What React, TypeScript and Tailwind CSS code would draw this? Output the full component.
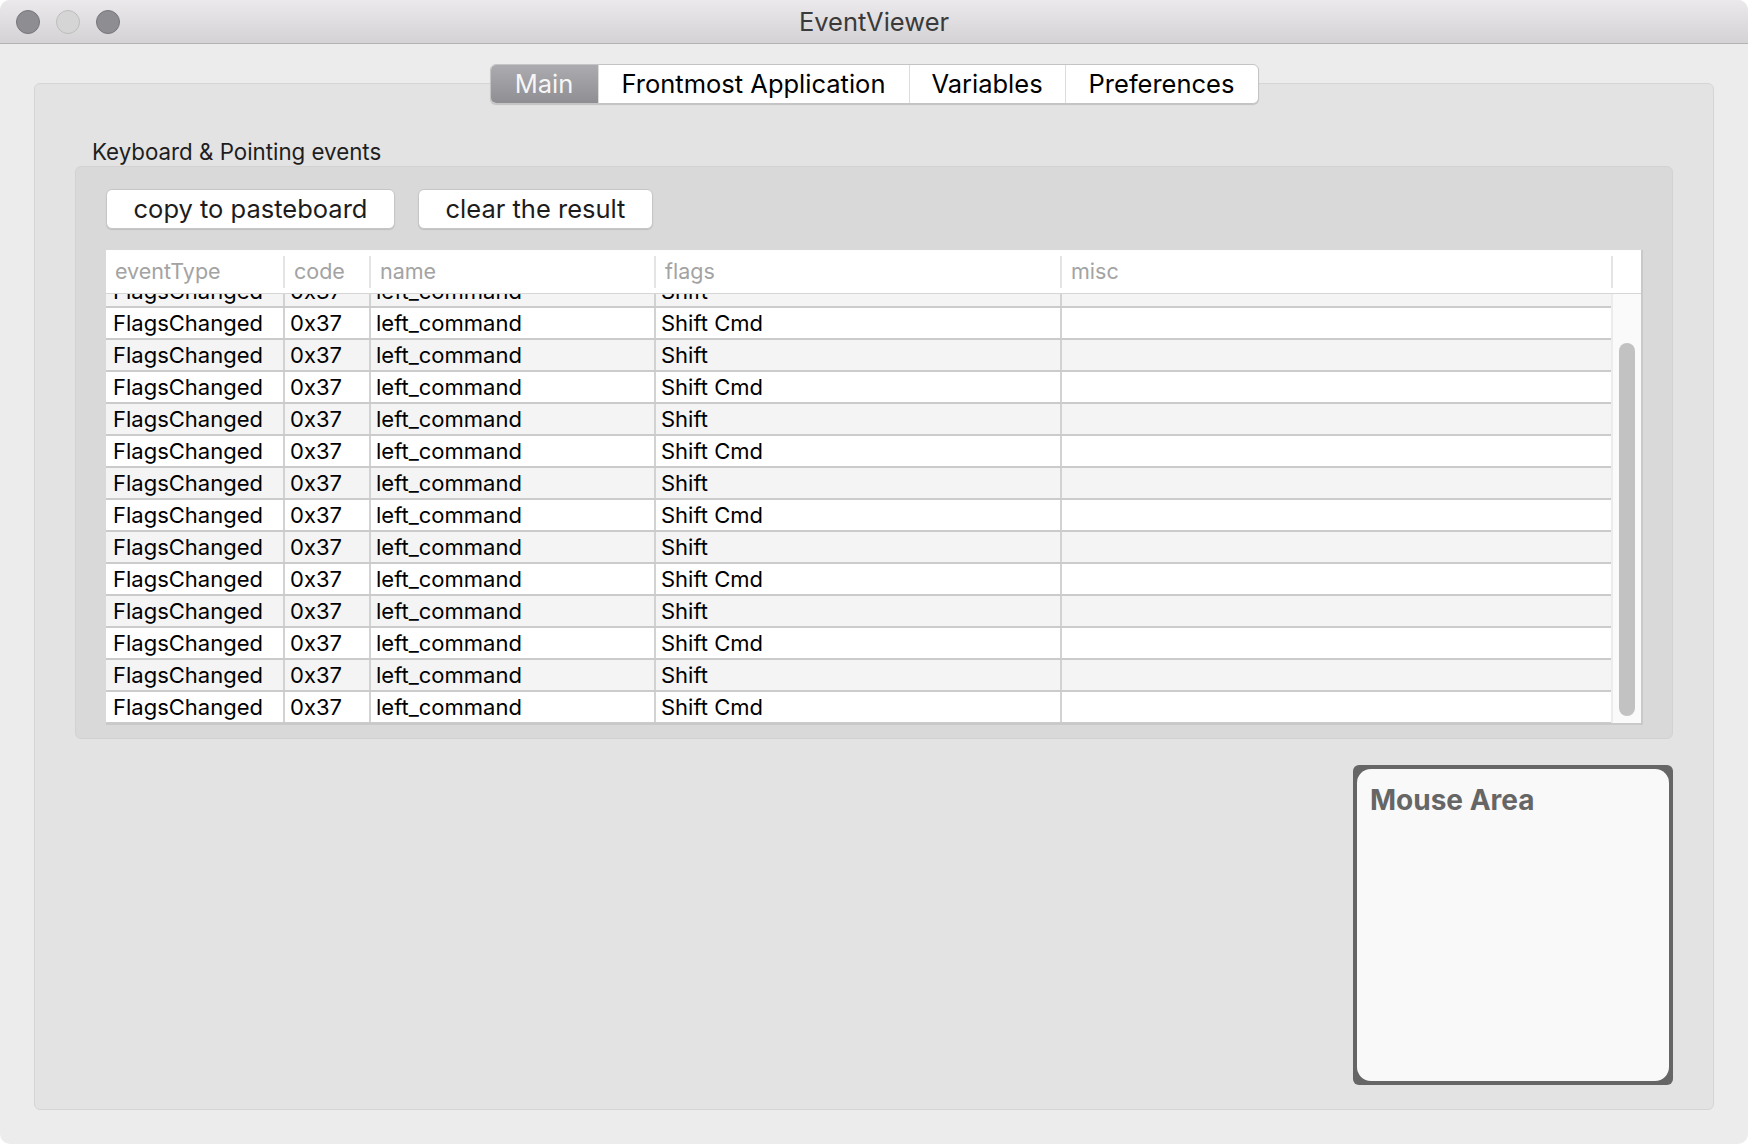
import React from 'react'

const font = { fontFamily: 'Inter, "Noto Sans", "Liberation Sans", sans-serif' }

type Row = {
  eventType: string
  code: string
  name: string
  flags: string
}

const rows: Row[] = Array.from({ length: 14 }, (_, i) => ({
  eventType: 'FlagsChanged',
  code: '0x37',
  name: 'left_command',
  flags: i % 2 === 0 ? 'Shift' : 'Shift Cmd',
}))

const tabs = [
  { label: 'Main', width: 'w-[107px]' },
  { label: 'Frontmost Application', width: 'w-[311px]' },
  { label: 'Variables', width: 'w-[156px]' },
  { label: 'Preferences', width: 'w-[193px]' },
]

function TrafficLights() {
  return (
    <div className="flex items-center gap-[16px] pl-[16px]">
      <span className="h-[24px] w-[24px] rounded-full border border-[#77767b] bg-[#8e8d92]" />
      <span className="h-[24px] w-[24px] rounded-full border border-[#bdbdbd] bg-[#d5d5d5]" />
      <span className="h-[24px] w-[24px] rounded-full border border-[#77767b] bg-[#8e8d92]" />
    </div>
  )
}

function Tabs() {
  return (
    <div className="relative z-10 flex justify-center">
      <div className="flex h-[40px] overflow-hidden rounded-[6px] border border-[#c4c4c4] bg-white shadow-[0_1px_1px_rgba(0,0,0,0.15)]">
        {tabs.map((tab, i) => (
          <div
            key={tab.label}
            className={
              i === 0
                ? `${tab.width} flex items-center justify-center bg-gradient-to-b from-[#acabaf] to-[#8f8e93] text-[25.5px] text-[#f6f6f6]`
                : `${tab.width} flex items-center justify-center border-l border-[#dcdcdc] text-[25.5px] text-black`
            }
          >
            {tab.label}
          </div>
        ))}
      </div>
    </div>
  )
}

function Button({ label, width }: { label: string; width: string }) {
  return (
    <button
      className={`${width} h-[40px] rounded-[6px] border border-[#c6c6c6] bg-white text-[25.5px] leading-none text-[#1c1c1c] shadow-[0_1px_1px_rgba(0,0,0,0.12)]`}
    >
      {label}
    </button>
  )
}

const cols = ['w-[177px]', 'w-[86px]', 'w-[285px]', 'w-[406px]', 'w-[551px]']

function EventTable() {
  const headers = ['eventType', 'code', 'name', 'flags', 'misc']
  return (
    <div className="flex h-[475px] w-[1537px] flex-col border-r-2 border-b-2 border-[#c9c9c9] bg-white">
      <div className="flex h-[44px] shrink-0 border-b border-[#d6d6d6]">
        {headers.map((h, i) => (
          <div key={h} className={`${cols[i]} flex items-center`}>
            <span className={i === 0 ? 'hidden' : 'h-[32px] w-[2px] bg-[#e4e4e4]'} />
            <span className="pl-[9px] text-[21.5px] text-[#a3a3a3]">{h}</span>
          </div>
        ))}
        <div className="flex w-[30px] items-center">
          <span className="h-[32px] w-[2px] bg-[#e4e4e4]" />
        </div>
      </div>
      <div className="flex min-h-0 flex-1">
        <div className="min-h-0 w-[1505px] overflow-hidden">
          <div className="-mt-[18px]">
            {rows.map((r, i) => (
              <div
                key={i}
                className={
                  i % 2 === 0
                    ? 'flex h-[32px] border-b-2 border-[#cbcbcb] bg-[#f4f4f4] text-[22px] text-black'
                    : 'flex h-[32px] border-b-2 border-[#cbcbcb] bg-white text-[22px] text-black'
                }
              >
                <div className={`${cols[0]} flex items-center pl-[7px]`}>{r.eventType}</div>
                <div className={`${cols[1]} flex items-center border-l-2 border-[#d2d2d2] pl-[5px]`}>{r.code}</div>
                <div className={`${cols[2]} flex items-center border-l-2 border-[#d2d2d2] pl-[5px]`}>{r.name}</div>
                <div className={`${cols[3]} flex items-center border-l-2 border-[#d2d2d2] pl-[5px]`}>{r.flags}</div>
                <div className={`${cols[4]} border-l-2 border-[#d2d2d2]`} />
              </div>
            ))}
          </div>
        </div>
        <div className="flex w-[30px] justify-center border-l-2 border-[#ececec] bg-[#fafafa] pt-[49px] pb-[7px]">
          <div className="h-[373px] w-[16px] rounded-full bg-[#c2c2c2]" />
        </div>
      </div>
    </div>
  )
}

export default function App() {
  return (
    <div className="h-[1144px] w-[1748px] bg-white" style={font}>
      <div className="flex h-full flex-col overflow-hidden rounded-[10px] bg-[#ececec]">
        <div className="grid h-[44px] shrink-0 grid-cols-[1fr_auto_1fr] items-center border-b border-[#b3b3b3] bg-gradient-to-b from-[#ebe9eb] to-[#d4d2d4]">
          <TrafficLights />
          <div className="pt-[2px] text-[25.5px] text-[#3a3a3a]">EventViewer</div>
          <div />
        </div>

        <div className="flex flex-1 flex-col px-[34px] pt-[20px] pb-[34px]">
          <Tabs />
          <div className="-mt-[21px] flex flex-1 flex-col rounded-[6px] border border-[#d5d5d5] bg-[#e3e3e3] px-[40px] pt-[55px]">
            <div className="pl-[17px] text-[22.3px] leading-[26px] text-[#1e1e1e]">Keyboard &amp; Pointing events</div>
            <div className="mt-[1px] flex h-[573px] flex-col rounded-[6px] border border-[#d2d2d2] bg-[#d9d9d9] pt-[22px] pl-[30px]">
              <div className="flex gap-[23px]">
                <Button label="copy to pasteboard" width="w-[289px]" />
                <Button label="clear the result" width="w-[235px]" />
              </div>
              <div className="mt-[21px]">
                <EventTable />
              </div>
            </div>
            <div className="mt-[26px] flex justify-end">
              <div className="h-[320px] w-[320px] rounded-[6px] bg-[#666666] p-[4px]">
                <div className="h-full w-full rounded-[14px] bg-[#f9f9f9] px-[13px] pt-[14px]">
                  <div className="text-[28px] font-bold leading-[34px] text-[#666666]">Mouse Area</div>
                </div>
              </div>
            </div>
          </div>
        </div>
      </div>
    </div>
  )
}
